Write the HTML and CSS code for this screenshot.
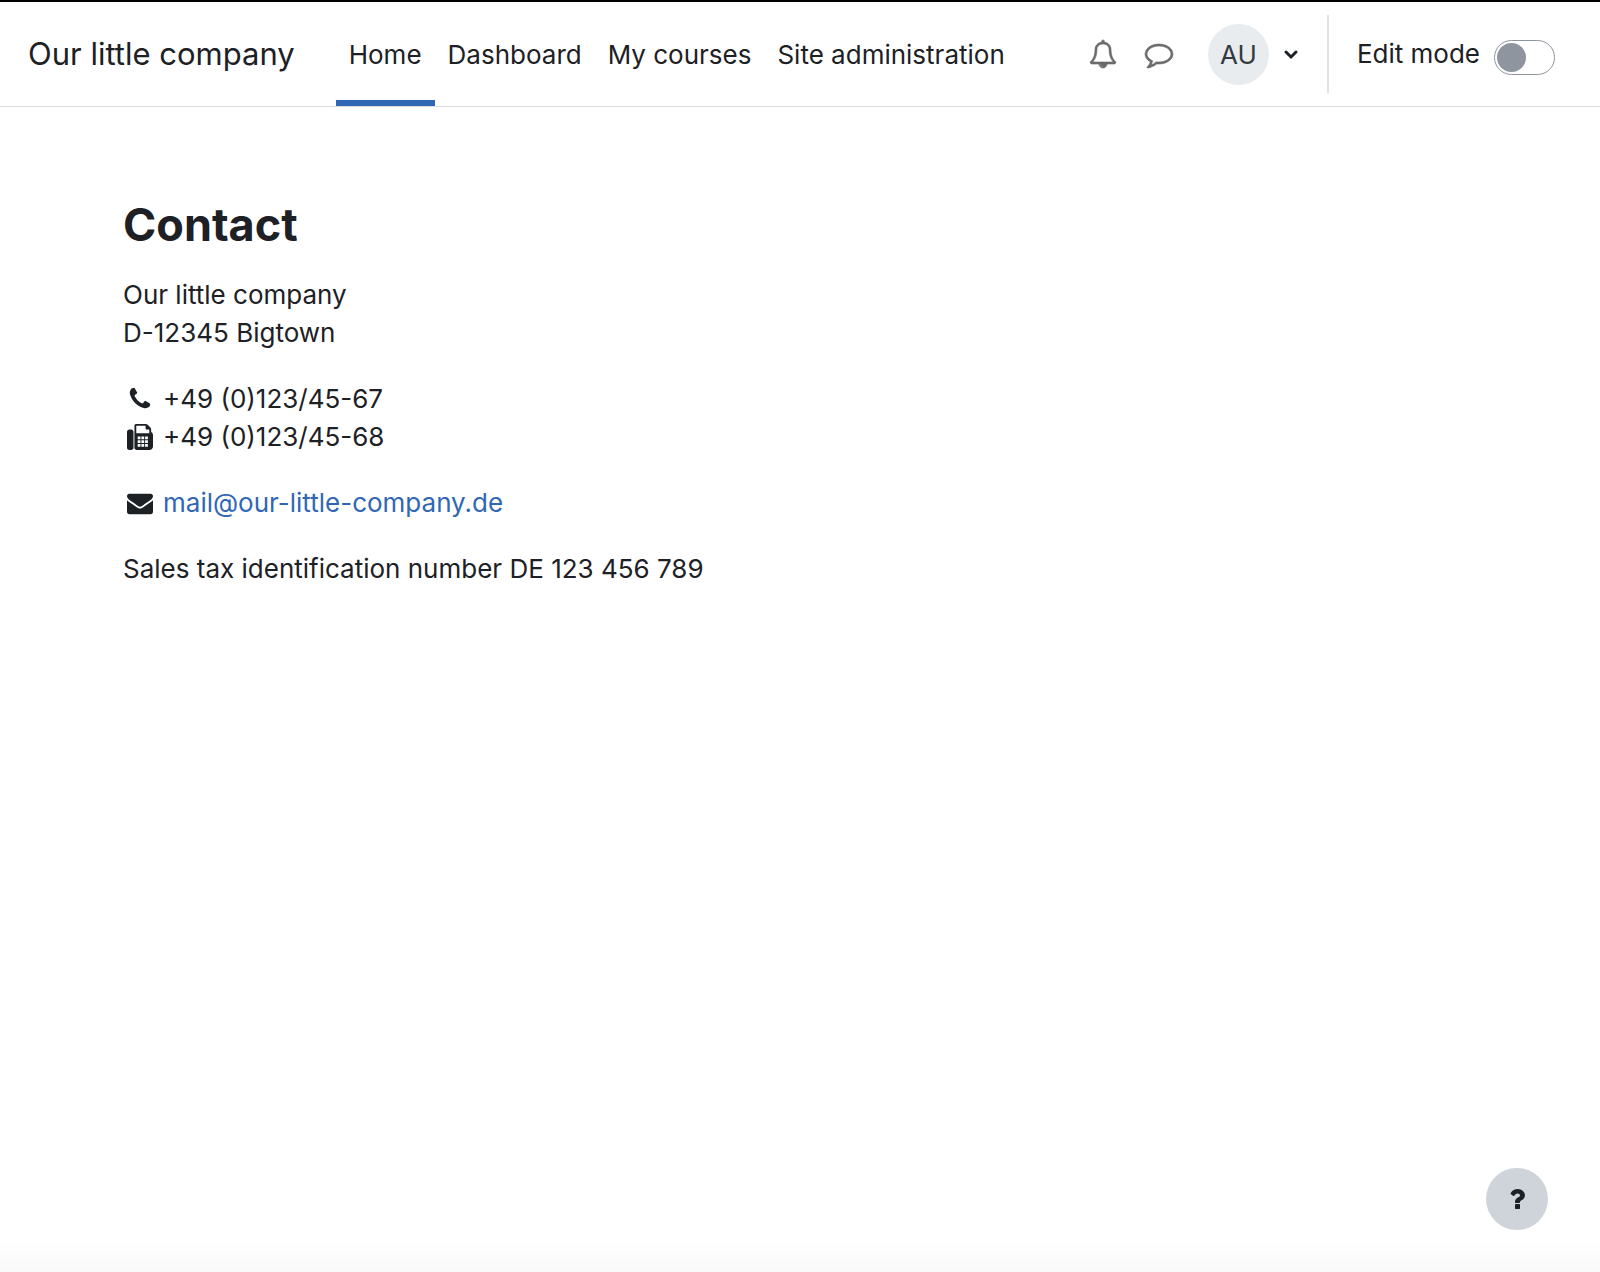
FILE: index.html
```html
<!DOCTYPE html>
<html lang="en">
<head>
<meta charset="utf-8">
<meta name="viewport" content="width=device-width, initial-scale=1">
<title>Contact | Our little company</title>
<link rel="stylesheet" href="styles.css">
</head>
<body>
<header class="navbar">
  <a class="brand" href="#">Our little company</a>
  <nav class="nav" aria-label="Site navigation">
    <a class="nav-link active" href="#" aria-current="page">Home</a>
    <a class="nav-link" href="#">Dashboard</a>
    <a class="nav-link" href="#">My courses</a>
    <a class="nav-link" href="#">Site administration</a>
  </nav>
  <div class="tools">
    <button class="icon-button" type="button" aria-label="Notifications">
      <svg class="tool-icon" viewBox="0 0 1792 1792" aria-hidden="true"><path d="M912 1696q0-16-16-16-59 0-101.500-42.500t-42.500-101.500q0-16-16-16t-16 16q0 73 51.500 124.500t124.500 51.500q16 0 16-16zm-666-288h1300q-266-300-266-832 0-51-24-105t-69-103-121.500-80.500-169.500-31.500-169.500 31.500-121.500 80.500-69 103-24 105q0 532-266 832zm1482 0q0 52-38 90t-90 38h-448q0 106-75 181t-181 75-181-75-75-181h-448q-52 0-90-38t-38-90q50-42 91-88t85-119.500 74.500-158.500 50-206 19.500-260q0-152 117-282.500t307-158.500q-8-19-8-39 0-40 28-68t68-28 68 28 28 68q0 20-8 39 190 28 307 158.500t117 282.500q0 139 19.500 260t50 206 74.500 158.500 85 119.500 91 88z"/></svg>
    </button>
    <button class="icon-button" type="button" aria-label="Messages">
      <svg class="tool-icon" viewBox="0 0 1792 1792" aria-hidden="true"><path d="M896 384q-204 0-381.500 69.500t-282 187.500-104.500 255q0 112 71.500 213.500t201.500 175.500l87 50-27 96q-24 91-70 172 152-63 275-171l43-38 57 6q69 8 130 8 204 0 381.500-69.500t282-187.500 104.500-255-104.500-255-282-187.500-381.500-69.500zm896 512q0 174-120 321.500t-326 233-450 85.500q-70 0-145-8-198 175-460 242-49 14-114 22h-5q-15 0-27-10.500t-16-27.500v-1q-3-4-.5-12t2-10 4.500-9.500l6-9 7-8.500 8-9q7-8 31-34.500t34.500-38 31-39.500 32.500-51 27-59 26-76q-157-89-247.500-220t-90.500-281q0-174 120-321.500t326-233 450-85.500 450 85.500 326 233 120 321.500z"/></svg>
    </button>
    <button class="user-menu" type="button" aria-label="User menu">
      <span class="avatar">AU</span>
      <svg class="chevron" viewBox="0 0 16 16" aria-hidden="true"><path d="M3 6l5 5 5-5"/></svg>
    </button>
    <div class="edit-mode">
      <label for="editmode">Edit mode</label>
      <input class="switch" id="editmode" type="checkbox" role="switch">
    </div>
  </div>
</header>
<main class="content">
  <h1>Contact</h1>
  <p>Our little company<br>D-12345 Bigtown</p>
  <p>
    <span class="entry"><svg class="icon" viewBox="0 0 1792 1792" aria-hidden="true"><path d="M1600 1240q0 27-10 70.500t-21 68.500q-21 50-122 106-94 51-186 51-27 0-53-3.500t-57.500-12.500-47-14.500-55.500-20.500-49-18q-98-35-175-83-127-79-264-216t-216-264q-48-77-83-175-3-9-18-49t-20.500-55.500-14.500-47-12.500-57.500-3.500-53q0-92 51-186 56-101 106-122 25-11 68.500-21t70.500-10q14 0 21 3 18 6 53 76 11 19 30 54t35 63.500 31 53.500q3 4 17.500 25t21.500 35.500 7 28.500q0 20-28.500 50t-62 55-62 53-28.500 46q0 9 5 22.500t8.500 20.500 14 24 11.500 19q76 137 174 235t235 174q2 1 19 11.500t24 14 20.500 8.500 22.500 5q18 0 46-28.500t53-62 55-62 50-28.500q14 0 28.500 7t35.500 21.500 25 17.500q25 15 53.500 31t63.500 35 54 30q70 35 76 53 3 7 3 21z"/></svg>+49 (0)123/45-67</span>
    <span class="entry"><svg class="icon" viewBox="0 0 1792 1792" aria-hidden="true"><path fill-rule="evenodd" d="M288 384q66 0 113 47t47 113v1088q0 66-47 113t-113 47h-128q-66 0-113-47t-47-113v-1088q0-66 47-113t113-47zM1664 547q58 34 93 93t35 128v768q0 106-75 181t-181 75h-864q-66 0-113-47t-47-113v-1536q0-40 28-68t68-28h672q40 0 88 20t76 48l152 152q28 28 48 76t20 88zM640 128v512h896v-256h-160q-40 0-68-28t-28-68v-160zM736 864h192v192h-192zM992 864h192v192h-192zM1248 864h192v192h-192zM736 1120h192v192h-192zM992 1120h192v192h-192zM1248 1120h192v192h-192zM736 1376h192v192h-192zM992 1376h192v192h-192zM1248 1376h192v192h-192z"/></svg>+49 (0)123/45-68</span>
  </p>
  <p><span class="entry"><svg class="icon" viewBox="0 0 1792 1792" aria-hidden="true"><path d="M1792 710v794q0 66-47 113t-113 47h-1472q-66 0-113-47t-47-113v-794q44 49 101 87 362 246 497 345 57 42 92.500 65.500t94.500 48 110 24.500h2q51 0 110-24.500t94.500-48 92.500-65.500q170-123 498-345 57-39 100-87zm0-294q0 79-49 151t-122 123q-376 261-468 325-10 7-42.500 31t-54 38.500-52 32.500-57.500 27-50 9h-2q-23 0-50-9t-57.500-27-52-32.500-54-38.500-42.500-31q-91-64-262-182.500t-205-142.500q-62-42-117-115.500t-55-136.500q0-78 41.500-130t118.500-52h1472q65 0 112.500 47t47.500 113z"/></svg><a class="mail" href="mailto:mail@our-little-company.de">mail@our-little-company.de</a></span></p>
  <p>Sales tax identification number DE 123 456 789</p>
</main>
<button class="help" type="button" aria-label="Help">
  <svg class="help-icon" viewBox="0 0 1792 1792" aria-hidden="true"><path d="M1088 1256v240q0 16-12 28t-28 12h-240q-16 0-28-12t-12-28v-240q0-16 12-28t28-12h240q16 0 28 12t12 28zm316-600q0 54-15.500 101t-35 76.500-55 59.500-57.500 43.500-61 35.500q-41 23-68.500 65t-27.500 67q0 17-12 32.500t-28 15.500h-240q-15 0-25.500-18.500t-10.500-37.500v-45q0-83 65-156.500t143-108.500q59-27 84-56t25-76q0-42-46.500-74t-107.500-32q-65 0-108 29-35 25-107 115-13 16-31 16-12 0-25-8l-164-125q-13-10-15.500-25t5.500-28q160-266 464-266 80 0 161 31t146 83 106 127.500 41 158.500z"/></svg>
</button>
</body>
</html>
```
FILE: styles.css
```css
* {
  box-sizing: border-box;
}

body {
  margin: 0;
  min-height: 100vh;
  background: linear-gradient(to top, #f9f9f9, #fff 32px);
  color: #1d2125;
  font: 26px/38px Inter, "Liberation Sans", sans-serif;
}

button {
  padding: 0;
  border: 0;
  background: none;
  color: inherit;
  font: inherit;
}

svg {
  display: block;
  fill: currentColor;
}

.navbar {
  display: flex;
  align-items: stretch;
  height: 107px;
  padding: 0 45px 0 28px;
  border-top: 2px solid #000;
  border-bottom: 1px solid #d9dbde;
  background: #fff;
  white-space: nowrap;
}

.brand {
  display: flex;
  align-items: center;
  margin-right: 41px;
  color: inherit;
  font-size: 31px;
  text-decoration: none;
}

.nav {
  display: flex;
}

.nav-link {
  display: flex;
  align-items: center;
  padding: 2px 13px 0;
  border-top: 6px solid transparent;
  border-bottom: 6px solid transparent;
  color: inherit;
  text-decoration: none;
}

.nav-link.active {
  border-bottom-color: #3067b5;
}

.tools {
  display: flex;
  align-items: center;
  margin-left: auto;
}

.icon-button {
  width: 56px;
  display: flex;
  justify-content: center;
  color: #6a6a6a;
}

.tool-icon,
.help-icon {
  width: 28px;
  height: 28px;
  overflow: visible;
}

.tool-icon {
  stroke: currentColor;
  stroke-width: 40;
}

.user-menu {
  display: flex;
  align-items: center;
  gap: 14px;
  margin: 0 28px 0 21px;
}

.avatar {
  width: 61px;
  height: 61px;
  border-radius: 50%;
  background: #e9ecef;
  color: #343a40;
  line-height: 61px;
}

.chevron {
  width: 16px;
  height: 16px;
  fill: none;
  stroke: currentColor;
  stroke-width: 3;
  stroke-linecap: round;
}

.edit-mode {
  display: flex;
  align-items: center;
  gap: 14px;
  height: 78px;
  padding-left: 28px;
  border-left: 2px solid #dee2e6;
}

.switch {
  appearance: none;
  width: 61px;
  height: 35px;
  margin: 6px 0 0;
  padding: 2px;
  border: 1px solid #8f959e;
  border-radius: 18px;
  background: #fff;
}

.switch::before {
  content: "";
  display: block;
  width: 29px;
  height: 29px;
  border-radius: 50%;
  background: #8f959e;
}

.switch:checked::before {
  margin-left: auto;
}

.content {
  padding: 90px 123px;
}

h1 {
  margin: 0 0 23px;
  font-size: 45px;
  font-weight: 700;
  line-height: 56px;
}

p {
  margin: 0 0 28px;
}

.entry {
  display: flex;
  align-items: center;
  gap: 10px;
}

.icon {
  width: 26px;
  height: 26px;
  margin-left: 4px;
}

.mail {
  color: #3067b5;
  text-decoration: none;
}

.help {
  position: fixed;
  right: 52px;
  bottom: 42px;
  display: flex;
  align-items: center;
  justify-content: center;
  width: 62px;
  height: 62px;
  border-radius: 50%;
  background: #ced4d9;
}
```
